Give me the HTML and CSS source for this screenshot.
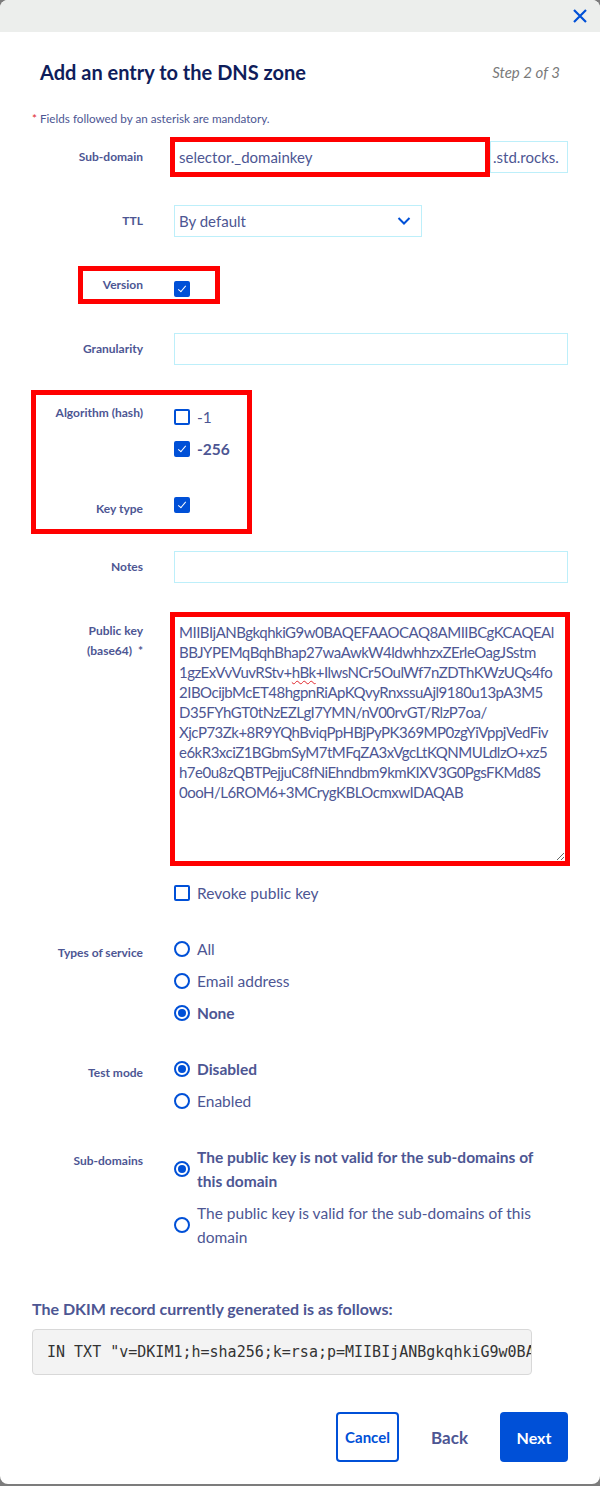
FILE: index.html
```html
<!DOCTYPE html>
<html lang="en">
<head>
    <meta charset="UTF-8">
    <meta name="viewport" content="width=device-width, initial-scale=1.0">
    <title>Add an entry to the DNS zone</title>
    <link rel="stylesheet" href="styles.css">
</head>
<body>
    <div class="modal">
        <div class="modal-top">
            <svg class="close-icon" width="14" height="14" viewBox="0 0 14 14">
                <path d="M1 1 L13 13 M13 1 L1 13" stroke="#0050d7" stroke-width="2.2" fill="none"/>
            </svg>
        </div>

        <div class="modal-body">
            <div class="header">
                <h1>Add an entry to the DNS zone</h1>
                <span class="step">Step 2 of 3</span>
            </div>

            <p class="mandatory"><span class="star">*</span> Fields followed by an asterisk are mandatory.</p>

            <!-- Sub-domain -->
            <div class="row row-subdomain">
                <label class="label">Sub-domain</label>
                <div class="field input-group">
                    <div class="input marked">selector._domainkey</div>
                    <div class="suffix">.std.rocks.</div>
                </div>
            </div>

            <!-- TTL -->
            <div class="row row-ttl">
                <label class="label">TTL</label>
                <div class="field">
                    <div class="select">
                        <span>By default</span>
                        <svg width="14" height="10" viewBox="0 0 14 10">
                            <path d="M1.5 2 L7 7.5 L12.5 2" stroke="#0050d7" stroke-width="2" fill="none"/>
                        </svg>
                    </div>
                </div>
            </div>

            <!-- Version -->
            <div class="row row-version">
                <div class="red-box box-version"></div>
                <label class="label">Version</label>
                <div class="field">
                    <div class="option"><span class="checkbox checked"></span></div>
                </div>
            </div>

            <!-- Granularity -->
            <div class="row row-granularity">
                <label class="label">Granularity</label>
                <div class="field"><div class="input input-wide"></div></div>
            </div>

            <!-- Algorithm / key type -->
            <div class="row row-algorithm">
                <div class="red-box box-algorithm"></div>
                <label class="label">Algorithm (hash)</label>
                <div class="field">
                    <div class="option"><span class="checkbox"></span><span>-1</span></div>
                    <div class="option"><span class="checkbox checked"></span><strong>-256</strong></div>
                </div>
            </div>
            <div class="row row-keytype">
                <label class="label">Key type</label>
                <div class="field">
                    <div class="option"><span class="checkbox checked"></span></div>
                </div>
            </div>

            <!-- Notes -->
            <div class="row row-notes">
                <label class="label">Notes</label>
                <div class="field"><div class="input input-wide"></div></div>
            </div>

            <!-- Public key -->
            <div class="row row-pubkey">
                <label class="label">Public key<br>(base64) &nbsp;*</label>
                <div class="field">
                    <div class="textarea marked">MIIBIjANBgkqhkiG9w0BAQEFAAOCAQ8AMIIBCgKCAQEAl<br>BBJYPEMqBqhBhap27waAwkW4ldwhhzxZErleOagJSstm<br>1gzExVvVuvRStv+<span class="typo">hBk</span>+IlwsNCr5OulWf7nZDThKWzUQs4fo<br>2IBOcijbMcET48hgpnRiApKQvyRnxssuAjl9180u13pA3M5<br>D35FYhGT0tNzEZLgI7YMN/nV00rvGT/RlzP7oa/<br>XjcP73Zk+8R9YQhBviqPpHBjPyPK369MP0zgYiVppjVedFiv<br>e6kR3xciZ1BGbmSyM7tMFqZA3xVgcLtKQNMULdlzO+xz5<br>h7e0u8zQBTPejjuC8fNiEhndbm9kmKIXV3G0PgsFKMd8S<br>0ooH/L6ROM6+3MCrygKBLOcmxwIDAQAB</div>
                </div>
            </div>

            <div class="row row-revoke">
                <span class="label"></span>
                <div class="field">
                    <div class="option"><span class="checkbox"></span><span>Revoke public key</span></div>
                </div>
            </div>

            <!-- Types of service -->
            <div class="row row-service">
                <label class="label">Types of service</label>
                <div class="field">
                    <div class="option"><span class="radio"></span><span>All</span></div>
                    <div class="option"><span class="radio"></span><span>Email address</span></div>
                    <div class="option"><span class="radio checked"></span><strong>None</strong></div>
                </div>
            </div>

            <!-- Test mode -->
            <div class="row row-test">
                <label class="label">Test mode</label>
                <div class="field">
                    <div class="option"><span class="radio checked"></span><strong>Disabled</strong></div>
                    <div class="option"><span class="radio"></span><span>Enabled</span></div>
                </div>
            </div>

            <!-- Sub-domains -->
            <div class="row row-subdomains">
                <label class="label">Sub-domains</label>
                <div class="field">
                    <div class="option option-long"><span class="radio checked"></span><strong>The public key is not valid for the sub-domains of this domain</strong></div>
                    <div class="option option-long"><span class="radio"></span><span>The public key is valid for the sub-domains of this domain</span></div>
                </div>
            </div>

            <h3 class="dkim-title">The DKIM record currently generated is as follows:</h3>
            <div class="code-box">IN TXT "v=DKIM1;h=sha256;k=rsa;p=MIIBIjANBgkqhkiG9w0BAQEFAAOCAQ8AMIIBCgKCAQEAl"</div>

            <div class="actions">
                <button class="btn btn-outline">Cancel</button>
                <button class="btn btn-ghost">Back</button>
                <button class="btn btn-primary">Next</button>
            </div>
        </div>
    </div>
</body>
</html>
```

FILE: styles.css
```css
body {
    margin: 0;
    background-color: #7c7c7c;
    font-family: 'Lato', 'Open Sans', sans-serif;
    color: #4d5693;
}

.modal {
    background-color: #fff;
    border-radius: 8px;
    height: 1484px;
    overflow: hidden;
}

.modal-top {
    height: 32px;
    background-color: #eceeec;
    display: flex;
    justify-content: flex-end;
    align-items: center;
    padding-right: 13px;
}

.modal-body {
    padding: 0 32px;
}

/* En-tete */
.header {
    display: flex;
    justify-content: space-between;
    align-items: center;
    padding: 0 8px;
    margin-top: 26px;
    height: 28px;
}
.header h1 {
    margin: 0;
    font-size: 20px;
    font-weight: 700;
    color: #0f1d5b;
}
.step {
    font-size: 15px;
    font-style: italic;
    color: #7a7a7a;
}

.mandatory {
    margin: 24px 0 0;
    font-size: 11.7px;
    line-height: 16px;
}
.star {
    color: #e0262c;
}

/* Lignes du formulaire */
.row {
    display: grid;
    grid-template-columns: 111px 1fr;
    column-gap: 31px;
    position: relative;
}
.label {
    font-size: 12px;
    font-weight: 700;
    line-height: 16px;
    text-align: right;
}
.field {
    font-size: 15.5px;
    line-height: 16px;
}

.row-subdomain { margin-top: 15px; align-items: center; }
.row-ttl { margin-top: 32px; align-items: center; }
.row-version { margin-top: 40px; }
.row-granularity { margin-top: 36px; align-items: center; }
.row-algorithm { margin-top: 40px; }
.row-keytype { margin-top: 40px; }
.row-keytype .label { padding-top: 4px; }
.row-keytype .option { margin-top: 0; }
.row-notes { margin-top: 34px; align-items: center; }
.row-pubkey { margin-top: 29px; }
.row-pubkey .label { line-height: 20px; padding-top: 9px; }
.row-revoke { margin-top: 19px; }
.row-service { margin-top: 36px; }
.row-service .label { padding-top: 8px; }
.row-test { margin-top: 36px; }
.row-test .label { padding-top: 8px; }
.row-subdomains { margin-top: 36px; }
.row-subdomains .label { padding-top: 8px; }

/* Champs */
.input-group {
    display: flex;
}
.input {
    box-sizing: border-box;
    height: 32px;
    border: 1px solid #bdeffa;
    padding: 0 4px;
    line-height: 30px;
    font-size: 15px;
}
.input-group .input {
    width: 312px;
    margin-right: 4px;
}
.suffix {
    box-sizing: border-box;
    flex: 1;
    height: 32px;
    border: 1px solid #bdeffa;
    padding: 0 2px;
    line-height: 30px;
    font-size: 15px;
}
.input-wide {
    width: 100%;
}

.select {
    box-sizing: border-box;
    width: 248px;
    height: 32px;
    border: 1px solid #bdeffa;
    padding: 0 10px 0 4px;
    display: flex;
    justify-content: space-between;
    align-items: center;
    font-size: 15px;
}

.marked {
    outline: 5px solid #ff0000;
    outline-offset: -1px;
}

.red-box {
    position: absolute;
    border: 5px solid #ff0000;
    box-sizing: border-box;
    pointer-events: none;
}
.box-version {
    left: 46px;
    top: -11px;
    width: 142px;
    height: 38px;
}
.box-algorithm {
    left: -1px;
    top: -15px;
    width: 221px;
    height: 144px;
}

.textarea {
    box-sizing: border-box;
    width: 392px;
    height: 246px;
    margin-top: 4px;
    padding: 5px 4px;
    font-size: 15px;
    line-height: 20px;
    letter-spacing: -0.5px;
    border: 1px solid #bdeffa;
    overflow: hidden;
    resize: both;
    white-space: nowrap;
}
.typo {
    text-decoration: underline wavy #e0262c;
    text-decoration-thickness: 1px;
    text-underline-offset: 2px;
}

/* Cases a cocher et boutons radio */
.option {
    display: flex;
    align-items: center;
    gap: 7px;
    margin-top: 4px;
    min-height: 16px;
}
.option + .option {
    margin-top: 16px;
}
.option strong {
    font-weight: 700;
}
.checkbox {
    flex: none;
    box-sizing: border-box;
    width: 16px;
    height: 16px;
    border: 2px solid #0050d7;
    border-radius: 2px;
    background-color: #fff;
    position: relative;
}
.checkbox.checked {
    background-color: #0050d7;
}
.checkbox.checked::after {
    content: '';
    position: absolute;
    left: 3.5px;
    top: 1px;
    width: 3px;
    height: 7px;
    border: solid #fff;
    border-width: 0 1.5px 1.5px 0;
    transform: rotate(40deg);
}
.radio {
    flex: none;
    box-sizing: border-box;
    width: 16px;
    height: 16px;
    border: 2px solid #0050d7;
    border-radius: 50%;
    position: relative;
}
.radio.checked::after {
    content: '';
    position: absolute;
    left: 2px;
    top: 2px;
    width: 8px;
    height: 8px;
    border-radius: 50%;
    background-color: #0050d7;
}

.option-long {
    line-height: 24px;
}
.option-long > :last-child {
    max-width: 352px;
}
.option-long + .option-long {
    margin-top: 8px;
}
.row-subdomains .option:first-child {
    margin-top: 0;
}

/* Enregistrement DKIM */
.dkim-title {
    margin: 50px 0 0;
    font-size: 16px;
    line-height: 20px;
    font-weight: 700;
}
.code-box {
    box-sizing: border-box;
    width: 500px;
    height: 46px;
    margin-top: 10px;
    padding: 0 14px;
    line-height: 44px;
    background-color: #f3f3f3;
    border: 1px solid #d8d8d8;
    border-radius: 4px;
    font-family: 'DejaVu Sans Mono', monospace;
    font-size: 15px;
    color: #333;
    white-space: pre;
    overflow: hidden;
}

/* Boutons */
.actions {
    display: flex;
    justify-content: flex-end;
    gap: 18px;
    margin-top: 37px;
}
.btn {
    height: 50px;
    border-radius: 4px;
    font-family: inherit;
    font-weight: 700;
    cursor: pointer;
}
.btn-outline {
    background-color: #fff;
    border: 2px solid #0050d7;
    color: #0050d7;
    font-size: 15px;
    padding: 0 6px;
    width: 63px;
}
.btn-ghost {
    background: none;
    border: none;
    color: #4d5693;
    font-size: 17px;
    padding: 0 14px;
}
.btn-primary {
    background-color: #0050d7;
    border: none;
    color: #fff;
    font-size: 16px;
    width: 68px;
}
```
